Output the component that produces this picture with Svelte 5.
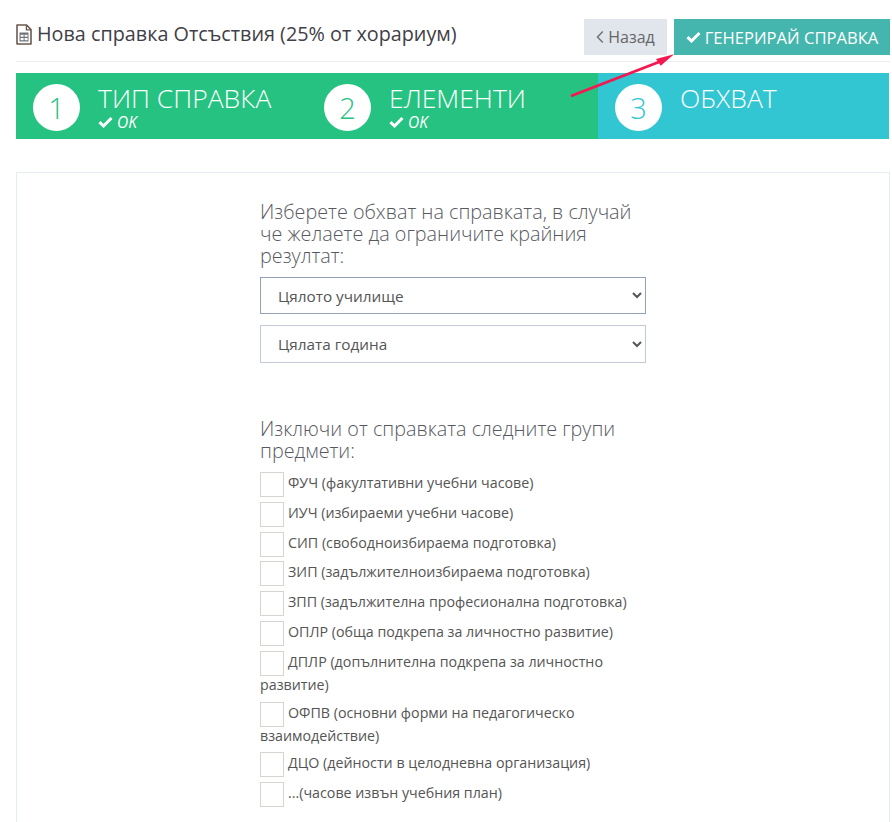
<script>
  const steps = [
    { n: 1, title: 'ТИП СПРАВКА', done: true },
    { n: 2, title: 'ЕЛЕМЕНТИ', done: true },
    { n: 3, title: 'ОБХВАТ', done: false }
  ];

  const groups = [
    'ФУЧ (факултативни учебни часове)',
    'ИУЧ (избираеми учебни часове)',
    'СИП (свободноизбираема подготовка)',
    'ЗИП (задължителноизбираема подготовка)',
    'ЗПП (задължителна професионална подготовка)',
    'ОПЛР (обща подкрепа за личностно развитие)',
    'ДПЛР (допълнителна подкрепа за личностно развитие)',
    'ОФПВ (основни форми на педагогическо взаимодействие)',
    'ДЦО (дейности в целодневна организация)',
    '...(часове извън учебния план)'
  ];
</script>

<div class="page">
  <header class="top">
    <h1 class="title">
      <svg class="file-icon" width="16" height="21" viewBox="0 0 16 21" aria-hidden="true">
        <path d="M1 1h9.6L15 5.6V20H1z" fill="#fff" stroke="#6b5a50" stroke-width="1.6" stroke-linejoin="round" />
        <path d="M10.4 1.2v4.6H15" fill="none" stroke="#6b5a50" stroke-width="1.3" />
        <path d="M3.5 8.5h9v9h-9z" fill="#6f7478" />
        <path d="M4.6 10.8h3v2h-3zM8.6 10.8h3v2h-3zM4.6 14h3v2.2h-3zM8.6 14h3v2.2h-3z" fill="#fff" />
      </svg>
      Нова справка Отсъствия (25% от хорариум)
    </h1>
    <div class="actions">
      <button type="button" class="btn back">
        <svg width="8" height="14" viewBox="0 0 8 14" aria-hidden="true">
          <path d="M6.8 1.5 1.5 7l5.3 5.5" fill="none" stroke="#6c757d" stroke-width="1.5" />
        </svg>
        Назад
      </button>
      <button type="button" class="btn generate">
        <svg width="15" height="12" viewBox="0 0 15 12" aria-hidden="true">
          <path d="M1.5 6.2 5.5 10l8-8" fill="none" stroke="#fff" stroke-width="3" />
        </svg>
        ГЕНЕРИРАЙ СПРАВКА
      </button>
    </div>
  </header>

  <div class="steps">
    {#each steps as step}
      <div class="step" class:active={!step.done}>
        <span class="circle">{step.n}</span>
        <div class="step-text">
          <div class="step-title">{step.title}</div>
          {#if step.done}
            <div class="ok">
              <svg width="15" height="12" viewBox="0 0 15 12" aria-hidden="true">
                <path d="M1.5 6.2 5.5 10l8-8" fill="none" stroke="#fff" stroke-width="3" />
              </svg>
              OK
            </div>
          {/if}
        </div>
      </div>
    {/each}
  </div>

  <section class="card">
    <div class="form">
      <h2 class="label">Изберете обхват на справката, в случай че желаете да ограничите крайния резултат:</h2>
      <select class="focused">
        <option>Цялото училище</option>
      </select>
      <select>
        <option>Цялата година</option>
      </select>

      <h2 class="label second">Изключи от справката следните групи предмети:</h2>
      <ul class="groups">
        {#each groups as group}
          <li><span class="check"></span>{group}</li>
        {/each}
      </ul>
    </div>
  </section>

  <svg class="arrow" width="120" height="60" viewBox="0 0 120 60" aria-hidden="true">
    <path d="M11 51 99 17" stroke="#f5174f" stroke-width="2.8" fill="none" />
    <path d="M114 9.3 96 14 100.7 20.7z" fill="#f5174f" />
  </svg>
</div>

<style>
  :global(body) {
    margin: 0;
    background: #fff;
    font-family: "Open Sans", sans-serif;
    color: #575962;
  }

  .page {
    position: relative;
    width: 892px;
    height: 822px;
    overflow: hidden;
    box-sizing: border-box;
    padding: 19px 2px 0 16px;
  }

  .top {
    display: flex;
    justify-content: space-between;
    height: 42px;
    border-bottom: 1px solid #ebedf2;
  }

  .title {
    margin: 0;
    font-size: 19.8px;
    font-weight: 400;
    line-height: 30px;
    color: #3f4047;
    display: flex;
    align-items: center;
    gap: 5px;
    align-self: flex-start;
  }

  .actions {
    display: flex;
    gap: 7px;
    align-items: flex-start;
  }

  .btn {
    height: 36px;
    border: 0;
    padding: 0;
    font-family: inherit;
    font-size: 16px;
    display: flex;
    align-items: center;
    justify-content: center;
    gap: 4px;
  }

  .back {
    width: 83px;
    background: #e1e5ec;
    color: #666;
  }

  .generate {
    width: 216px;
    background: #44b6ae;
    color: #fff;
    font-weight: 500;
    font-size: 16.6px;
  }

  .steps {
    margin-top: 11px;
    display: grid;
    grid-template-columns: repeat(3, 291px);
    height: 66px;
  }

  .step {
    background: #26c281;
    display: flex;
    padding: 11px 0 0 17px;
    gap: 18px;
    box-sizing: border-box;
    color: #fff;
  }

  .step.active {
    background: #32c5d2;
  }

  .circle {
    width: 47px;
    height: 47px;
    border-radius: 50%;
    background: #fff;
    color: #26c281;
    font-size: 29px;
    font-weight: 300;
    display: flex;
    align-items: center;
    justify-content: center;
    flex: none;
  }

  .active .circle {
    color: #32c5d2;
  }

  .step-title {
    font-size: 26.5px;
    font-weight: 300;
    line-height: 28px;
  }

  .ok {
    font-size: 15.5px;
    font-style: italic;
    font-weight: 400;
    line-height: 16px;
    margin-top: 2px;
    display: flex;
    align-items: center;
    gap: 4px;
  }

  .card {
    margin-top: 33px;
    border: 1px solid #e7ecf1;
    height: 700px;
    padding: 28px 0 0 243px;
  }

  .form {
    width: 386px;
  }

  .label {
    margin: 0 0 10px;
    font-size: 19.8px;
    font-weight: 300;
    line-height: 22px;
    color: #575962;
  }

  .label.second {
    margin-top: 55px;
    margin-bottom: 10px;
  }

  select {
    display: block;
    width: 100%;
    height: 38px;
    margin-bottom: 10px;
    padding: 0 13px;
    background: #fff;
    border: 1px solid #c2cad8;
    border-radius: 0;
    font-family: inherit;
    font-size: 15.3px;
    color: #555;
    box-sizing: border-box;
  }

  select.focused {
    border-color: #93a1bb;
    height: 37px;
    margin-bottom: 11px;
    padding-top: 1px;
  }

  .groups {
    margin: 0;
    padding: 0;
    list-style: none;
    font-size: 14.25px;
    line-height: 21px;
    color: #555;
  }

  .groups li {
    margin-bottom: 6.8px;
  }

  .check {
    display: inline-block;
    width: 22px;
    height: 23px;
    border: 1px solid #d8d4cf;
    vertical-align: -7px;
    margin: 0 4px -2px 0;
  }

  .arrow {
    position: absolute;
    left: 560px;
    top: 45px;
  }
</style>
